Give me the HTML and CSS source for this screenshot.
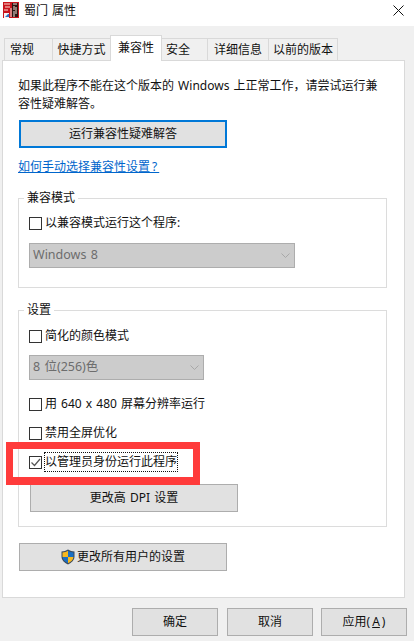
FILE: index.html
```html
<!DOCTYPE html>
<html lang="zh-CN">
<head>
    <meta charset="utf-8">
    <title>蜀门 属性</title>
    <link rel="stylesheet" href="styles.css">
</head>
<body>
    <div class="titlebar">
        <svg class="app-icon" width="16" height="16" viewBox="0 0 16 16">
            <rect width="16" height="16" fill="#c8141c"/>
            <rect x="9" y="1" width="6" height="14" fill="#2a1512"/>
            <path d="M1 2h6M2 5h5M1 8h4M10 2h4M11 4v4M13 5v7" stroke="#f6dcd0" stroke-width="1" fill="none"/>
            <rect x="1" y="11" width="5" height="5" fill="#f4f4f4"/>
            <path d="M2 15l3-3h1v3z" fill="#2f6fc0"/>
            <path d="M8 6v9M11 9v6" stroke="#f0e6e0" stroke-width="1"/>
        </svg>
        <span class="title">蜀门 属性</span>
        <svg class="close" width="11" height="11" viewBox="0 0 11 11">
            <path d="M.5.5l10 10M10.5.5l-10 10" stroke="#111" stroke-width="1" fill="none"/>
        </svg>
    </div>

    <div class="body">
        <div class="tabs">
            <div class="tab tab-general">常规</div>
            <div class="tab tab-shortcut">快捷方式</div>
            <div class="tab tab-compat active">兼容性</div>
            <div class="tab tab-security">安全</div>
            <div class="tab tab-details">详细信息</div>
            <div class="tab tab-previous">以前的版本</div>
        </div>

        <div class="panel">
            <p class="intro">如果此程序不能在这个版本的 Windows 上正常工作，请尝试运行兼容性疑难解答。</p>
            <button class="btn btn-wide btn-default">运行兼容性疑难解答</button>
            <a class="link" href="#">如何手动选择兼容性设<span class="link-end">置?</span></a>

            <div class="group group-mode">
                <div class="legend">兼容模式</div>
                <div class="row row-first"><span class="check"></span><span>以兼容模式运行这个程序:</span></div>
                <div class="select select-os">
                    <span>Windows 8</span>
                    <svg width="9" height="5" viewBox="0 0 9 5"><path d="M.5.5l4 4 4-4" stroke="#a8a8a8" fill="none"/></svg>
                </div>
            </div>

            <div class="group group-settings">
                <div class="legend">设置</div>
                <div class="row row-color"><span class="check"></span><span>简化的颜色模式</span></div>
                <div class="select select-color">
                    <span>8 位(256)色</span>
                    <svg width="9" height="5" viewBox="0 0 9 5"><path d="M.5.5l4 4 4-4" stroke="#a8a8a8" fill="none"/></svg>
                </div>
                <div class="row row-res"><span class="check"></span><span>用 640 x 480 屏幕分辨率运行</span></div>
                <div class="row row-next"><span class="check"></span><span>禁用全屏优化</span></div>
                <div class="row row-next">
                    <span class="check">
                        <svg width="11" height="11" viewBox="0 0 11 11"><path d="M1.500 5.500l3 3 5.500-6.500" stroke="#555" stroke-width="1.200" fill="none"/></svg>
                    </span>
                    <span class="focused">以管理员身份运行此程序</span>
                </div>
                <button class="btn btn-wide btn-dpi">更改高 DPI 设置</button>
            </div>

            <button class="btn btn-wide btn-all">
                <svg width="14" height="16" viewBox="0 0 14 16">
                    <path d="M7 .5c2 1.300 4 1.900 6.500 2v5c0 3.500-2.700 6.200-6.500 8-3.800-1.800-6.500-4.500-6.500-8v-5c2.500-.1 4.500-.7 6.500-2z" fill="#3b4a5c"/>
                    <path d="M7 1.700v6.300h5.500v-4.600c-2.100-.2-3.800-.7-5.500-1.700z" fill="#1a6fc4"/>
                    <path d="M7 1.700c-1.700 1-3.400 1.500-5.500 1.700v4.600h5.500z" fill="#f6b81f"/>
                    <path d="M1.500 8h5.500v6.300c-3-1.500-5.200-3.500-5.500-6.300z" fill="#1a6fc4"/>
                    <path d="M7 8h5.500c-.3 2.800-2.500 4.800-5.500 6.300z" fill="#f6b81f"/>
                </svg>
                <span>更改所有用户的设置</span>
            </button>

            <div class="highlight"></div>
        </div>

        <div class="footer">
            <button class="btn btn-footer btn-ok">确定</button>
            <button class="btn btn-footer">取消</button>
            <button class="btn btn-footer">应用(<u>A</u>)</button>
        </div>
    </div>
</body>
</html>
```

FILE: styles.css
```css
html, body {
    margin: 0;
    padding: 0;
}
body {
    width: 414px;
    height: 641px;
    overflow: hidden;
    background-color: #ffffff;
    color: #111111;
    font-family: "Noto Sans", "Noto Sans CJK SC", sans-serif;
    font-size: 12px;
    line-height: 18px;
    word-spacing: 1px;
}
.titlebar {
    display: flex;
    align-items: center;
    height: 26px;
    padding: 0 10px 0 3px;
    box-sizing: border-box;
}
.app-icon {
    margin-right: 5px;
    margin-bottom: 6px;
}
.title {
    flex: 1;
    margin-top: -4px;
}
.close {
    margin-bottom: 6px;
}
.body {
    height: 615px;
    background-color: #f0f0f0;
    padding-top: 9px;
    box-sizing: border-box;
}
.tabs {
    display: flex;
    align-items: flex-end;
    height: 25px;
    padding-left: 4px;
    position: relative;
    z-index: 1;
}
.tab {
    height: 22px;
    line-height: 22px;
    box-sizing: border-box;
    text-align: center;
    border: 1px solid #d9d9d9;
    border-bottom: none;
    border-right: none;
}
.tab-general { width: 48px; text-align: left; padding-left: 5px; }
.tab-shortcut { width: 58px; }
.tab-compat { width: 52px; }
.tab-security { width: 45px; text-align: left; padding-left: 4px; border-left: none; }
.tab-details { width: 61px; }
.tab-previous { width: 70px; border-right: 1px solid #d9d9d9; }
.tab.active {
    height: 26px;
    line-height: 24px;
    margin-bottom: -1px;
    background-color: #ffffff;
    border-right: 1px solid #d9d9d9;
}
.panel {
    position: relative;
    width: 403px;
    height: 538px;
    margin-left: 2px;
    padding: 16px 0 0 15px;
    box-sizing: border-box;
    background-color: #ffffff;
    border: 1px solid #d9d9d9;
}
.intro {
    margin: 0;
    width: 368px;
}
.btn {
    display: flex;
    align-items: center;
    justify-content: center;
    gap: 2px;
    height: 28px;
    padding: 0;
    background-color: #e1e1e1;
    border: 1px solid #adadad;
    box-sizing: border-box;
    color: #111111;
    font: inherit;
    word-spacing: inherit;
}
.btn-wide {
    width: 208px;
    margin-left: 1px;
}
.btn-default {
    margin-top: 7px;
    border: 2px solid #0078d7;
}
.link {
    display: block;
    margin-top: 10px;
    color: #0066cc;
}
.link-end {
    letter-spacing: 2px;
}
.group {
    width: 369px;
    margin-top: 22px;
    padding-left: 10px;
    box-sizing: border-box;
    border: 1px solid #dcdcdc;
}
.group-mode { height: 90px; }
.group-settings { height: 217px; }
.legend {
    width: fit-content;
    margin: -10px 0 0 -5px;
    padding: 0 3px;
    background-color: #ffffff;
}
.row {
    display: flex;
    align-items: center;
    gap: 3px;
    height: 18px;
}
.row-first { margin-top: 7px; }
.row-color { margin-top: 8px; }
.row-res { margin-top: 15px; }
.row-next { margin-top: 11px; }
.check {
    display: flex;
    align-items: center;
    justify-content: center;
    width: 13px;
    height: 13px;
    box-sizing: border-box;
    border: 1px solid #333333;
    background-color: #ffffff;
}
.focused {
    outline: 1px dotted #111111;
}
.select {
    display: flex;
    align-items: center;
    justify-content: space-between;
    height: 25px;
    padding: 0 4px 2px 3px;
    box-sizing: border-box;
    background-color: #cccccc;
    border: 1px solid #adadad;
    color: #6d6d6d;
    font-size: 12.5px;
}
.select svg {
    margin-top: 2px;
}
.select-os {
    width: 266px;
    margin-top: 11px;
}
.select-color {
    width: 175px;
    margin-top: 10px;
}
.btn-dpi {
    margin-top: 13px;
}
.btn-all {
    margin-top: 16px;
}
.highlight {
    position: absolute;
    left: 3px;
    top: 381px;
    width: 194px;
    height: 43px;
    box-sizing: border-box;
    border: solid #ff3b3b;
    border-width: 7px 7px 8px 7px;
}
.footer {
    display: flex;
    justify-content: flex-end;
    gap: 8px;
    padding: 10px 7px 0 0;
}
.btn-footer {
    width: 86px;
}
.btn-ok {
    margin-right: 1px;
}
```
